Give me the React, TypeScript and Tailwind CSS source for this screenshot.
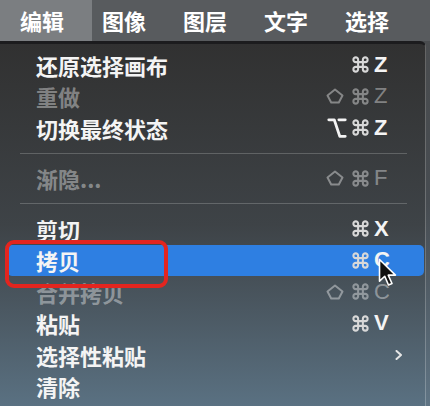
import React from "react";
import { Command, Option } from "lucide-react";

type Row =
	| { sep: true }
	| {
			sep?: false;
			label: string;
			disabled?: boolean;
			active?: boolean;
			mod?: "shift" | "opt";
			keyName?: string;
			submenu?: boolean;
	  };

const rows: Row[] = [
	{ label: "还原选择画布", keyName: "Z" },
	{ label: "重做", disabled: true, mod: "shift", keyName: "Z" },
	{ label: "切换最终状态", mod: "opt", keyName: "Z" },
	{ sep: true },
	{ label: "渐隐...", disabled: true, mod: "shift", keyName: "F" },
	{ sep: true },
	{ label: "剪切", keyName: "X" },
	{ label: "拷贝", active: true, keyName: "C" },
	{ label: "合并拷贝", disabled: true, mod: "shift", keyName: "C" },
	{ label: "粘贴", keyName: "V" },
	{ label: "选择性粘贴", submenu: true },
	{ label: "清除" },
];

const menus = ["图像", "图层", "文字", "选择"];

const ShiftIcon = () => (
	<svg width="18" height="16" viewBox="0 0 18 16" fill="none">
		<path
			d="M9 1.5 L16.5 7.5 L12.8 14.5 L5.2 14.5 L1.5 7.5 Z"
			stroke="currentColor"
			strokeWidth="2"
			strokeLinejoin="round"
		/>
	</svg>
);

const Cursor = () => (
	<svg width="19" height="29" viewBox="0 0 13 20" className="absolute left-[378px] top-[258px]">
		<path
			d="M1 1 L1 16 L4.6 12.6 L7.2 18.6 L9.6 17.6 L7 11.8 L12 11.8 Z"
			fill="#111"
			stroke="#fff"
			strokeWidth="1.1"
			strokeLinejoin="round"
		/>
	</svg>
);

const MenuRow = ({ row }: { row: Row }) => {
	if (row.sep) {
		return (
			<div className="h-[19px] flex items-center pl-[20px] pr-[18px]">
				<div className="h-px w-full bg-white/20" />
			</div>
		);
	}

	const { label, disabled, active, mod, keyName, submenu } = row;
	const textColor = disabled ? "text-white/40" : "text-[#f4f4f4]";
	const cmdColor = disabled ? "text-white/40" : "text-[#d8d8d8]";

	return (
		<div
			className={`h-[31.5px] ml-[7px] mr-px pl-[29px] pr-[21px] flex items-center rounded-[5px] ${
				active ? "bg-[#2e7fe2]" : ""
			}`}
		>
			<span className={`text-[22px] font-bold leading-none ${textColor}`}>{label}</span>
			<div className="ml-auto flex items-center">
				{keyName && (
					<div className="flex items-center">
						<div className={`w-[22px] mr-[3px] flex justify-start ${textColor}`}>
							{mod === "shift" && <ShiftIcon />}
							{mod === "opt" && <Option size={22} strokeWidth={3} />}
						</div>
						<div className={`w-[19px] mr-[4px] flex justify-center ${cmdColor}`}>
							<Command size={19} strokeWidth={2.6} />
						</div>
						<span
							className={`w-[15px] text-[22px] leading-none font-['Liberation_Sans',sans-serif] ${
								disabled ? "font-normal" : "font-bold"
							} ${textColor}`}
						>
							{keyName}
						</span>
					</div>
				)}
				<div className="w-[14px] flex justify-end">
					{submenu && (
						<svg width="8" height="10" viewBox="0 0 8 10" fill="none">
							<path
								d="M1.5 1 L6 5 L1.5 9"
								stroke="#e6e6e6"
								strokeWidth="2"
								strokeLinecap="round"
								strokeLinejoin="round"
							/>
						</svg>
					)}
				</div>
			</div>
		</div>
	);
};

export default function App() {
	return (
		<div className="relative w-[430px] h-[406px] overflow-hidden bg-linear-to-b from-[#4a4c4e] via-[#474c51] to-[#5f7484] font-[family-name:'Noto_Sans_CJK_SC',sans-serif]">
			<div className="h-[41px] bg-[#585b5e] flex items-stretch text-white text-[22px] font-bold">
				<div className="w-[92px] pl-[20px] bg-[#7b7e81] flex items-center">编辑</div>
				<div className="pl-[10px] flex items-center gap-[37px]">
					{menus.map((m) => (
						<span key={m}>{m}</span>
					))}
				</div>
			</div>
			<div className="w-[426px] h-[365px] border-t-[3px] border-r border-t-[#1c1c1e] border-r-white/25 rounded-tr-[6px] bg-linear-to-b from-[#313131] via-[#3e4347] to-[#5a7182] pt-[5px]">
				{rows.map((row, i) => (
					<MenuRow key={i} row={row} />
				))}
			</div>
			<div className="absolute left-[5px] top-[240px] w-[163px] h-[48px] border-[4px] border-[#e3251f] rounded-[9px]" />
			<Cursor />
		</div>
	);
}
